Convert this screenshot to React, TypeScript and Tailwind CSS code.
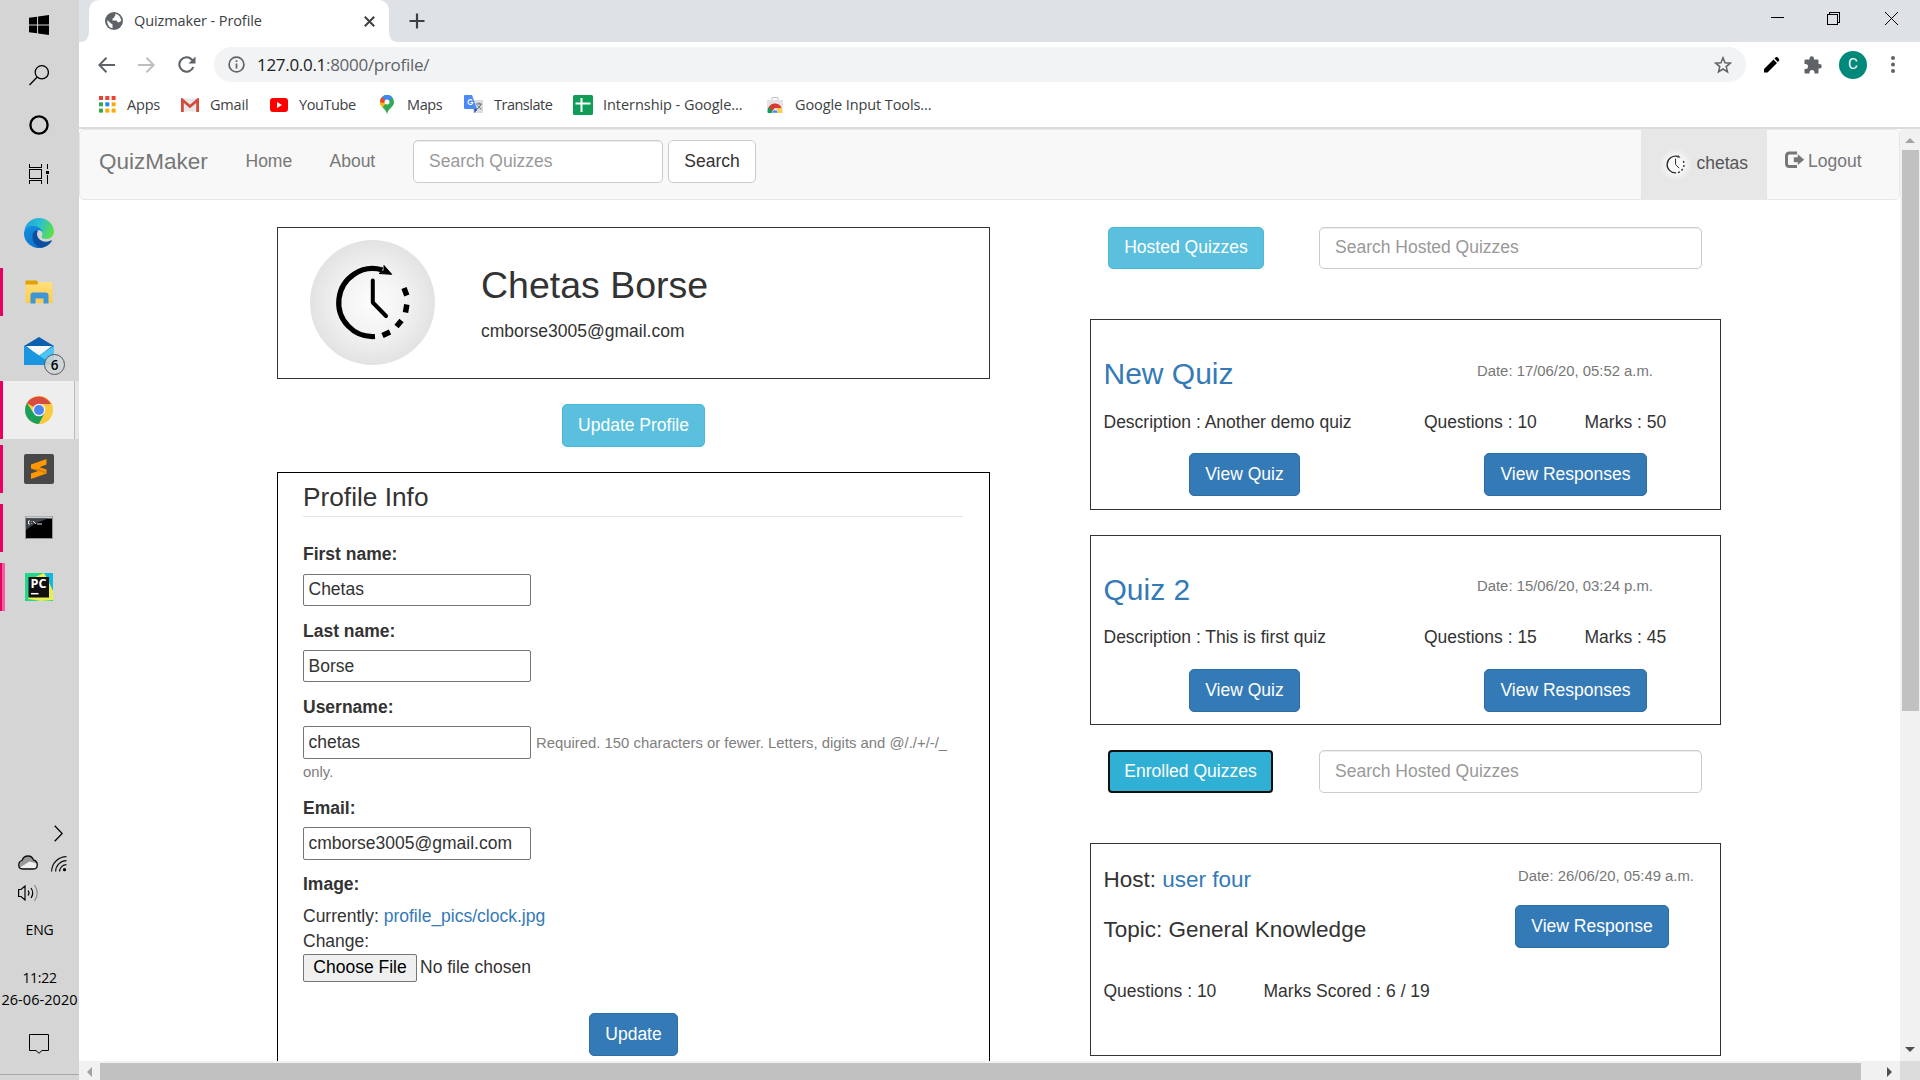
import React from "react";

const UI = "font-['Open_Sans','Noto_Sans',sans-serif]";

function WindowsLogo() {
  return (
    <svg width="20" height="20" viewBox="0 0 20 20" fill="#000">
      <path d="M0 2.8 8.1 1.7V9.5H0zM9.1 1.5 20 0V9.5H9.1zM0 10.5H8.1V18.3L0 17.2zM9.1 10.5H20V20L9.1 18.5z" />
    </svg>
  );
}

function EdgeLogo() {
  return (
    <svg width="30" height="30" viewBox="0 0 30 30">
      <defs>
        <linearGradient id="edgeTop" x1="0" y1="0.2" x2="1" y2="0.5">
          <stop offset="0" stopColor="#1f9fe0" />
          <stop offset="0.5" stopColor="#2cc0d0" />
          <stop offset="1" stopColor="#5be04a" />
        </linearGradient>
        <linearGradient id="edgeLeft" x1="0" y1="0" x2="0.6" y2="1">
          <stop offset="0" stopColor="#1590e0" />
          <stop offset="1" stopColor="#0a72cc" />
        </linearGradient>
      </defs>
      <path d="M0.3 13C1.2 5.500 7.500 0 15 0c9 0 15 6.500 15 13.500 0 4.500-3.500 7.500-7.500 7.500-3.500 0-5.300-1.300-5-2.300 1.700-2 1.200-5-1.500-6.500C10 8 3 8.500.3 13z" fill="url(#edgeTop)" />
      <path d="M0 14.500C1 10 5 7.500 9.500 8c4.500.300 8.300 2.700 9 6-1-1.500-3-2.200-4.500-1.500-3 1.500-3.500 6-1 9.500 2.300 3.300 7 5 11.500 3.500-3 4-8 5.300-12.500 4.200C4.500 27.800-.500 21.500 0 14.500z" fill="url(#edgeLeft)" />
      <path d="M10 13.500c-3 4-1.500 10 2 13.500 1.700 1.700 3.500 2.600 5.500 2.800 4-.700 8-3 10.200-6.600.300-.700-.200-1.100-.900-.700-4.500 2.200-9.500 1.300-12.300-2.300-1.800-2.400-2-5-.500-7.700-1.500-.300-3 .200-4 1z" fill="#0c4f9e" />
    </svg>
  );
}

function FolderIcon() {
  return (
    <svg width="28" height="24" viewBox="0 0 28 24">
      <defs>
        <linearGradient id="fold" x1="0" y1="0" x2="0" y2="1">
          <stop offset="0" stopColor="#ffdf80" />
          <stop offset="1" stopColor="#ffcb45" />
        </linearGradient>
      </defs>
      <path d="M.5 1.500Q.5.500 1.500.500H11.500l1.500 1.500V6H.5z" fill="#e2a100" />
      <path d="M.5 4.500H12l1.800-2.500H26.500q1 0 1 1V22q0 1-1 1H1.500q-1 0-1-1z" fill="url(#fold)" />
      <path d="M5.500 23.500V15q0-2.500 2.500-2.500H20.500q3 0 3 2.500V23.500H18.500V18.500H10.500V23.500z" fill="#3d96d8" />
    </svg>
  );
}

function MailIcon() {
  return (
    <svg width="42" height="38" viewBox="0 0 42 38">
      <path d="M0 9 15 0 30 9 15 20z" fill="#0a5fb0" />
      <path d="M2 9H28L15 19z" fill="#f4f8fc" />
      <path d="M0 9 15 18.500 30 9V28H0z" fill="#2eb5ee" />
      <path d="M0 9 30 28H0z" fill="#1a96e0" />
      <path d="M15 18.500 30 9V28z" fill="#4cc4f4" />
      <circle cx="30.500" cy="27.500" r="10" fill="#cfd5d8" fillOpacity="0.850" stroke="#555" strokeWidth="1" />
      <text x="30.500" y="32.500" textAnchor="middle" fontSize="13.500" fontWeight="600" fontFamily="Open Sans" fill="#000">6</text>
    </svg>
  );
}

function ChromeLogo() {
  return (
    <svg width="28" height="28" viewBox="0 0 28 28">
      <circle cx="14" cy="14" r="14" fill="#fcca3f" />
      <path d="M14 14 1.900 7A14 14 0 0 1 26.100 8H14z" fill="#db4a3e" />
      <path d="M1.900 7A14 14 0 0 0 14 28L19.500 17.500 14 14 8.500 17z" fill="#1a9f5c" />
      <path d="M14 8H26.100A14 14 0 0 1 14 28L20 17z" fill="#fcca3f" />
      <circle cx="14" cy="14" r="6.300" fill="#f2f2f2" />
      <circle cx="14" cy="14" r="5" fill="#4b87f0" />
    </svg>
  );
}

function SublimeIcon() {
  return (
    <svg width="30" height="30" viewBox="0 0 30 30">
      <rect width="30" height="30" rx="2" fill="#484848" />
      <path d="M7 10.500 22.500 5V10.500L15.500 13.200 22.500 15.500V19.500L7 25V19.500L14 17 7 14.500z" fill="#ff9800" />
      <path d="M7 14.500 14 17 22.500 19.500 22.500 18 15 15.300z" fill="#d97f00" />
    </svg>
  );
}

function TerminalIcon() {
  return (
    <svg width="28" height="23" viewBox="0 0 28 23">
      <rect x="0.500" y="0.500" width="27" height="22" fill="#000" stroke="#8f959a" />
      <rect x="1" y="0.500" width="26" height="2" fill="#c9cdd0" />
      <path d="M1 2.500H23C14 6 8 8 1 14z" fill="#3f4347" />
      <path d="M5 5H3.500V8H5M6.500 5.500v.5M6.500 7.500v.5M8 5l3 3M12 8h5" stroke="#e8e8e8" fill="none" />
    </svg>
  );
}

function PycharmIcon() {
  return (
    <svg width="28" height="28" viewBox="0 0 28 28">
      <rect width="28" height="28" fill="#25d58c" />
      <path d="M18 0H28V18L20 8z" fill="#0fbbdd" />
      <path d="M8 5 19 0 22 5 28 18V27L16 28 3 26z" fill="#e6f14e" />
      <rect x="3.500" y="4" width="20.500" height="20.500" fill="#111" />
      <text x="5.500" y="15" fontSize="11.500" fontWeight="700" fontFamily="Open Sans" fill="#fff" textLength="16" lengthAdjust="spacingAndGlyphs">PC</text>
      <path d="M6 20.700H13.500" stroke="#fff" strokeWidth="1.500" />
    </svg>
  );
}

function Tile({ children, active, edge }: { children: React.ReactNode; active?: "run" | "focus"; edge?: boolean }) {
  return (
    <div className={active === "focus" ? "relative flex h-[58px] w-[79px] items-center bg-[#eeeeee]" : "relative flex h-[59px] w-[79px] items-center"}>
      {active === "run" && <span className="absolute left-0 top-[6px] h-[48px] w-[3px] bg-[#ea005e]" />}
      {edge && <span className="absolute left-[2px] top-[6px] h-[48px] w-[3px] bg-[#f0619b]" />}
      {active === "focus" && (
        <>
          <span className="absolute left-0 top-0 h-full w-[3px] bg-[#ea005e]" />
          <span className="absolute right-0 top-0 h-full w-[5px] border-l border-[#bdbdbd] bg-[#e6e6e6]" />
        </>
      )}
      <div className="flex w-[78px] justify-center">{children}</div>
    </div>
  );
}

function Taskbar() {
  return (
    <aside className={`flex h-full w-[79px] shrink-0 flex-col bg-[#d5d5d5] text-black ${UI}`}>
      <div className="flex h-[50px] w-[78px] items-center justify-center"><WindowsLogo /></div>
      <div className="flex h-[50px] w-[78px] items-center justify-center">
        <svg width="20" height="21" viewBox="0 0 20 21" fill="none" stroke="#000" strokeWidth="1.300">
          <circle cx="12.800" cy="7.300" r="6.600" /><path d="M8 12.300.500 20" />
        </svg>
      </div>
      <div className="flex h-[50px] w-[78px] items-center justify-center">
        <svg width="20" height="20" viewBox="0 0 20 20"><circle cx="10" cy="10" r="8.600" fill="none" stroke="#000" strokeWidth="2.300" /></svg>
      </div>
      <div className="flex h-[48px] w-[78px] items-center justify-center">
        <svg width="20" height="20" viewBox="0 0 20 20" fill="none" stroke="#000" shapeRendering="crispEdges">
          <path d="M.500 5.500H12.500V14.500H.500zM.500 0V3.500H12.500V0M.500 20V16.500H12.500V20M18.500 0V5M18.500 11V20" />
          <rect x="17" y="6.500" width="3" height="3" fill="#000" stroke="none" />
        </svg>
      </div>
      <div className="mt-[5px]"><Tile><EdgeLogo /></Tile></div>
      <Tile active="run"><FolderIcon /></Tile>
      <div className="pb-px"><Tile><span className="ml-[12px] mt-[10px] block"><MailIcon /></span></Tile></div>
      <Tile active="focus"><ChromeLogo /></Tile>
      <Tile active="run"><SublimeIcon /></Tile>
      <Tile active="run"><TerminalIcon /></Tile>
      <Tile active="run" edge><PycharmIcon /></Tile>
      <div className="mt-[209px] flex h-[17px] pl-[54px]">
        <svg width="9" height="17" viewBox="0 0 9 17" fill="none" stroke="#000" strokeWidth="1.300"><path d="M.700.700 8.200 8.500.700 16.300" /></svg>
      </div>
      <div className="mt-[13px] flex h-[17px] items-start gap-[13px] pl-[18px]">
        <svg width="20" height="15" viewBox="0 0 20 15">
          <path d="M4.500 14Q.700 14 .700 10 .700 6.500 4 5.500 5.500 1 10 1 14 1 15.500 5 19.300 6 19.300 10 19.300 14 15.500 14z" fill="#9a9a9a" />
          <path d="M2 12.500 11.500 6.500 18.500 8.500Q19.500 13.500 15.500 13.500H4.500Q2.500 13.500 2 12.500z" fill="#f0f0f0" />
          <path d="M4.500 14Q.700 14 .700 10 .700 6.500 4 5.500 5.500 1 10 1 14 1 15.500 5 19.300 6 19.300 10 19.300 14 15.500 14z" fill="none" stroke="#111" strokeWidth="1.300" />
        </svg>
        <svg className="mt-px" width="16" height="16" viewBox="0 0 16 16" fill="none" stroke="#111" strokeWidth="1.200">
          <path d="M.600 15.500A15 15 0 0 1 15.500.600M4.600 15.500A11 11 0 0 1 15.500 4.600M8.600 15.500A7 7 0 0 1 15.500 8.600" />
          <circle cx="13.500" cy="13.700" r="1.600" fill="#000" stroke="none" />
        </svg>
      </div>
      <div className="mt-[12px] flex h-[18px] pl-[18px]">
        <svg width="21" height="18" viewBox="0 0 21 18" fill="none" stroke="#000" strokeWidth="1.200">
          <path d="M.600 5.500H3L7 2V16L3 12.500H.600zM10 6.500Q12 9 10 11.500M13 4Q16.500 9 13 14" />
          <path d="M16.500 1Q22 9 16.500 17" stroke="#888" />
        </svg>
      </div>
      <div className="mt-[18px] w-[79px] text-center text-[14px] leading-[20px] tracking-[-0.2px]">ENG</div>
      <div className="mt-[27px] w-[79px] text-center text-[14px] leading-[22px] tracking-[-0.3px]">11:22</div>
      <div className="w-[79px] whitespace-nowrap text-center text-[14.500px] leading-[22px] tracking-[0.05px]">26-06-2020</div>
      <div className="mt-[23px] flex pl-[29px]">
        <svg width="20" height="20" viewBox="0 0 20 20" fill="none" stroke="#000"><path d="M.500.500H19.500V16.500H13L10 19.300 7 16.500H.500z" /></svg>
      </div>
      <div className="mt-[20px] h-px w-full bg-[#a8a8a8]" />
    </aside>
  );
}

function TabStrip() {
  return (
    <div className={`flex h-[42px] bg-[#dee1e6] ${UI}`}>
      <svg className="self-end" width="10" height="10" viewBox="0 0 10 10"><path d="M0 10Q10 10 10 0V10z" fill="#fff" /></svg>
      <div className="flex w-[300px] items-center rounded-t-[10px] bg-white pl-[16px] pr-[14px]">
        <svg width="18" height="18" viewBox="0 0 18 18">
          <circle cx="9" cy="9" r="9" fill="#5f6368" />
          <path d="M2 8 6 11.500Q8 12 7.500 13.500V16.300Q2.500 15.500 2 8zM10.500 1.800Q16 3.500 16.200 9L13.500 10.500Q12 10 11.500 8.500H7.500V6.500Q9.500 6.500 9.500 4.500 10.500 4 10.500 1.800z" fill="#fff" />
        </svg>
        <span className="ml-[11px] flex-1 text-[14.500px] leading-[20px] tracking-[-0.1px] text-[#3c4043]">Quizmaker - Profile</span>
        <svg width="11" height="11" viewBox="0 0 11 11" stroke="#3c4043" strokeWidth="2"><path d="M.800.800 10.200 10.200M10.200.800.800 10.200" /></svg>
      </div>
      <svg className="self-end" width="10" height="10" viewBox="0 0 10 10"><path d="M10 10Q0 10 0 0V10z" fill="#fff" /></svg>
      <svg className="ml-[9.500px] mt-[13px]" width="16" height="16" viewBox="0 0 16 16" stroke="#3c4043" strokeWidth="2.200"><path d="M8 .500V15.500M.500 8H15.500" /></svg>
      <div className="ml-auto flex pr-[22px] pt-[12px]">
        <svg className="mr-[43px]" width="13" height="13" viewBox="0 0 13 13"><path d="M0 5.500H13" stroke="#000" shapeRendering="crispEdges" /></svg>
        <svg className="mr-[45px]" width="13" height="13" viewBox="0 0 13 13" fill="none" stroke="#000" shapeRendering="crispEdges"><path d="M.500 2.500H10.500V12.500H.500zM2.500 2.500V.500H12.500V10.500H10.500" /></svg>
        <svg width="13" height="13" viewBox="0 0 13 13" stroke="#000"><path d="M0 0 13 13M13 0 0 13" /></svg>
      </div>
    </div>
  );
}

function Toolbar() {
  return (
    <div className={`flex h-[45px] items-center bg-white pl-[19px] ${UI}`}>
      <svg width="17" height="16" viewBox="0 0 17 16" fill="none" stroke="#5f6368" strokeWidth="2"><path d="M17 8H1.500M8.500.800 1.300 8 8.500 15.200" /></svg>
      <svg className="ml-[23px]" width="17" height="16" viewBox="0 0 17 16" fill="none" stroke="#bcbec0" strokeWidth="2"><path d="M0 8H15.500M8.500.800 15.700 8 8.500 15.200" /></svg>
      <svg className="ml-[23px]" width="18" height="17" viewBox="0 0 18 17" fill="none" stroke="#5f6368" strokeWidth="2.100">
        <path d="M15.300 11A7.200 7.200 0 1 1 13.700 3.400L16 6" /><path d="M17.500.500V7.500H10.500z" fill="#5f6368" stroke="none" />
      </svg>
      <div className="ml-[18px] flex h-[35px] w-[1532px] items-center rounded-full bg-[#f1f3f4] pl-[14px] pr-[14px]">
        <svg width="17" height="17" viewBox="0 0 17 17" fill="none" stroke="#5f6368" strokeWidth="1.700"><circle cx="8.500" cy="8.500" r="7.400" /><path d="M8.500 7.500V12.500M8.500 4.300V6" /></svg>
        <span className="ml-[12px] flex-1 text-[17px] leading-[24px] tracking-[-0.300px] text-[#5f6368]"><span className="text-[#202124]">127.0.0.1</span>:8000/profile/</span>
        <svg width="18" height="18" viewBox="0 0 18 18" fill="none" stroke="#5f6368" strokeWidth="1.500"><path d="M9 1.800 11 6.800 16.300 7.200 12.200 10.600 13.500 15.800 9 13 4.500 15.800 5.800 10.600 1.700 7.200 7 6.800z" /></svg>
      </div>
      <svg className="ml-[18px]" width="16" height="16" viewBox="0 0 16 16"><path d="M0 12 9.500 2.500 13 6 3.500 15.500H0zM10.500 1.500 12 0Q13 -.300 14 .700L15 2Q15.500 3 15 3.700L13.800 5z" fill="#000" /></svg>
      <svg className="ml-[24px]" width="18" height="18" viewBox="0 0 18 18"><path d="M.500 4.500Q.500 3.500 1.500 3.500H5.500V2.500A2.200 2.200 0 0 1 10 2.500V3.500H13.500Q14.500 3.500 14.500 4.500V8H15.500A2.200 2.200 0 0 1 15.500 12.500H14.500V16.500Q14.500 17.500 13.500 17.500H10.500V16.500A2.400 2.400 0 0 0 5.500 16.500V17.500H1.500Q.500 17.500 .500 16.500V13H1.500A2.400 2.400 0 0 0 1.500 8H.500z" fill="#5f6368" /></svg>
      <div className="ml-[17px] flex size-[28px] items-center justify-center rounded-full bg-[#00897b] font-[Roboto,sans-serif] text-[15px] text-white">C</div>
      <svg className="ml-[24px]" width="4" height="17" viewBox="0 0 4 17" fill="#5f6368"><circle cx="2" cy="2" r="2" /><circle cx="2" cy="8.500" r="2" /><circle cx="2" cy="15" r="2" /></svg>
    </div>
  );
}

const appDots = ["#ea4335", "#ea4335", "#ea4335", "#34a853", "#1e88f7", "#fbab00", "#34a853", "#fbab00", "#fbab00"];

function Bookmark({ width, pad, icon, label, track = "tracking-[-0.4px]" }: { width: string; pad: string; icon: React.ReactNode; label: string; track?: string }) {
  return (
    <div className={`flex shrink-0 items-center ${width}`}>
      <div className={`flex shrink-0 items-center ${pad}`}>{icon}</div>
      <span className={`whitespace-nowrap text-[14.500px] leading-[20px] text-[#3c4043] ${track}`}>{label}</span>
    </div>
  );
}

function Bookmarks() {
  return (
    <div className={`flex h-[42px] items-center border-b-2 border-[#dadce0] bg-white pb-[5px] pl-[20px] ${UI}`}>
      <Bookmark width="w-[82px]" pad="w-[28px]" label="Apps" track="tracking-[-0.2px]" icon={
        <svg width="17" height="17" viewBox="0 0 17 17">{appDots.map((c, i) => <rect key={i} x={(i % 3) * 6.300} y={Math.floor(i / 3) * 6.300} width="4" height="4" fill={c} />)}</svg>} />
      <Bookmark width="w-[89px]" pad="w-[29px]" label="Gmail" track="tracking-[-0.2px]" icon={
        <svg width="18" height="14" viewBox="0 0 18 14"><rect x="1" y=".5" width="16" height="13" fill="#e8e8e8" /><path d="M1.400 14V2L9 8.500 16.600 2V14" fill="none" stroke="#d54b3d" strokeWidth="2.800" /></svg>} />
      <Bookmark width="w-[110px]" pad="w-[29px]" label="YouTube" icon={
        <svg width="18" height="14" viewBox="0 0 18 14"><rect width="18" height="14" rx="3" fill="#f00" /><path d="M7 4 12 7 7 10z" fill="#fff" /></svg>} />
      <Bookmark width="w-[84px]" pad="w-[27px]" label="Maps" icon={
        <svg width="14" height="19" viewBox="0 0 14 19">
          <path d="M7 0A7 7 0 0 1 14 7C14 12 8.500 13 7 19 5.500 13 0 12 0 7A7 7 0 0 1 7 0z" fill="#34a853" />
          <path d="M0 7A7 7 0 0 1 2 2L7 7 2.500 12.500Q0 10 0 7z" fill="#fbbc04" />
          <path d="M0 7A7 7 0 0 1 2 2L7 7 3 8z" fill="#ea4335" />
          <path d="M2 2A7 7 0 0 1 12.500 2.500L7 7z" fill="#4285f4" />
          <circle cx="7" cy="7" r="2.500" fill="#fff" />
        </svg>} />
      <Bookmark width="w-[109px]" pad="w-[30px]" label="Translate" track="tracking-[-0.5px]" icon={
        <svg width="20" height="19" viewBox="0 0 20 19">
          <rect x="9" y="5" width="10" height="13" fill="#dcdcdc" /><path d="M10 13H13V15L10.500 18z" fill="#3447b8" />
          <path d="M1 0H8L13 14H1Q0 14 0 13V1Q0 0 1 0z" fill="#4c8bf5" />
          <path d="M8.300 5.500A2.400 2.400 0 1 0 8.800 7.500H6.500" fill="none" stroke="#fff" strokeWidth="1.100" />
          <path d="M12 9H18M15 7.500V9M17 9Q16 12.500 12.500 14.500M13.500 10.500 17.500 14.500" stroke="#5f7480" fill="none" />
        </svg>} />
      <Bookmark width="w-[194px]" pad="w-[30px]" label="Internship - Google..." track="tracking-[-0.050px]" icon={
        <svg width="20" height="20" viewBox="0 0 20 20"><rect width="20" height="20" rx="1.500" fill="#0f9d58" /><path d="M8.500 3V17M2.500 8.500H17.500" stroke="#fff" strokeWidth="2" /></svg>} />
      <Bookmark width="w-[200px]" pad="w-[28px]" label="Google Input Tools..." track="tracking-[-0.100px]" icon={
        <svg width="16" height="16" viewBox="0 0 16 16">
          <path d="M5 3V.500H11V3" stroke="#c4c4c4" fill="none" /><rect y="3" width="16" height="13" fill="#e4e4e4" />
          <path d="M1 16A7 7 0 0 1 3 8.500L7 16z" fill="#0f9d58" /><path d="M2 10A7 7 0 0 1 14.500 11H8L5 14z" fill="#db3a30" /><path d="M10 11H14.500Q15.500 13 15 16H9z" fill="#ffcd40" />
          <path d="M5 16A3 3 0 0 1 11 16z" fill="#4285f4" stroke="#eee" strokeWidth=".6" />
        </svg>} />
    </div>
  );
}

function ClockArt({ size, color = "#000" }: { size: number; color?: string }) {
  return (
    <svg width={size} height={size} viewBox="0 0 125 125" fill="none" stroke={color}>
      <path d="M65 96.500A34 34 0 1 1 72.500 30" strokeWidth="5.200" />
      <path d="M74 25.500 81.700 34.300 69 33.500 74 30.500z" fill={color} strokeWidth="1" />
      <path d="M62.800 40.500V62.500L76 76" strokeWidth="4" strokeLinecap="round" strokeLinejoin="round" />
      <path d="M94 48 96.800 55.500M96.800 64.500 95.500 72.500M91.500 80.500 86.500 86.500M80 92 72.500 95.500" strokeWidth="5.500" />
    </svg>
  );
}

function Navbar() {
  return (
    <nav className="flex h-[71px] w-[1821px] shrink-0 rounded-[5px] border border-[#e7e7e7] bg-[#f8f8f8] pl-[19px] text-[17.500px] leading-[25px] text-[#777]">
      <a className="mt-[19px] w-[146.500px] text-[22.500px]">QuizMaker</a>
      <a className="mt-[19px] w-[84px]">Home</a>
      <a className="mt-[19px] w-[83.500px]">About</a>
      <input placeholder="Search Quizzes" className="mt-[10px] h-[43px] w-[250px] rounded-[5px] border border-[#ccc] bg-white px-[15px] pb-[1px] text-[17.500px] shadow-[inset_0_1px_1px_rgba(0,0,0,0.075)] placeholder:text-[#999]" />
      <button className="ml-[5px] mt-[10px] h-[43px] w-[88px] rounded-[5px] border border-[#ccc] bg-white pb-[1px] text-[#333]">Search</button>
      <div className="ml-auto flex">
        <a className="flex h-[69px] w-[126px] bg-[#e7e7e7] pl-[19px] text-[#555]">
          <span className="mt-[19px] size-[31px] bg-[radial-gradient(circle,#fafafa_30%,#e7e7e7_75%)]"><ClockArt size={31} color="#2b2b2b" /></span>
          <span className="ml-[5.500px] mt-[21px]">chetas</span>
        </a>
        <a className="flex w-[132px] pl-[18px]">
          <svg className="mt-[21px]" width="20" height="18" viewBox="0 0 20 18"><path d="M12 2H4.500Q1.500 2 1.500 5V12.500Q1.500 15.500 4.500 15.500H12" fill="none" stroke="#777" strokeWidth="3" /><path d="M8.500 6H12.500V2.500L19.500 8.800 12.500 14.500V11.500H8.500z" fill="#777" stroke="#f8f8f8" strokeWidth=".6" /></svg>
          <span className="ml-[3px] mt-[19px]">Logout</span>
        </a>
      </div>
    </nav>
  );
}

function Primary({ children, className }: { children: React.ReactNode; className: string }) {
  return <button className={`h-[43px] shrink-0 rounded-[5px] border border-[#2e6da4] bg-[#337ab7] pb-[1px] text-white ${className}`}>{children}</button>;
}

function Field({ value, className }: { value: string; className: string }) {
  return <input defaultValue={value} className={`block w-[228px] shrink-0 rounded-[2px] border border-[#767676] bg-white px-[4.500px] text-[17.500px] text-[#333] ${className}`} />;
}

function ProfileColumn() {
  return (
    <div className="flex w-[713px] shrink-0 flex-col">
      <section className="flex h-[152px] shrink-0 border border-[#333] pl-[32px]">
        <div className="mt-[12px] size-[125px] overflow-hidden rounded-full bg-[radial-gradient(circle,#fdfdfd_0%,#f3f3f3_35%,#e2e2e2_72%)]"><ClockArt size={125} /></div>
        <div className="ml-[46px]">
          <h2 className="mt-[37px] text-[37.500px] leading-[41px]">Chetas Borse</h2>
          <p className="mt-[13px]">cmborse3005@gmail.com</p>
        </div>
      </section>
      <button className="mt-[25px] h-[43px] w-[143px] shrink-0 self-center rounded-[5px] border border-[#46b8da] bg-[#5bc0de] pb-[1px] text-white">Update Profile</button>
      <section className="mt-[25px] flex h-[620px] shrink-0 flex-col border border-black px-[25px]">
        <h3 className="mt-[6px] h-[38px] w-[660px] border-b border-[#e5e5e5] text-[26.250px] leading-[37px]">Profile Info</h3>
        <label className="mt-[25px] font-bold">First name:</label>
        <Field value="Chetas" className="mt-[7px] h-[32px] pb-[2px]" />
        <label className="mt-[13px] font-bold">Last name:</label>
        <Field value="Borse" className="mt-[6px] h-[32px]" />
        <label className="mt-[13px] font-bold">Username:</label>
        <div className="mt-[6px] flex h-[33px]">
          <Field value="chetas" className="h-[33px]" />
          <span className="ml-[5px] mt-[5px] whitespace-nowrap text-[14.875px] text-[#808080]">Required. 150 characters or fewer. Letters, digits and @/./+/-/_</span>
        </div>
        <span className="mt-[1px] text-[14.875px] text-[#808080]">only.</span>
        <label className="mt-[11px] font-bold">Email:</label>
        <Field value="cmborse3005@gmail.com" className="mt-[6px] h-[33px]" />
        <label className="mt-[12px] font-bold">Image:</label>
        <p className="mt-[7px]">Currently: <a className="text-[#337ab7]">profile_pics/clock.jpg</a></p>
        <p>Change:</p>
        <div className="flex h-[28px]">
          <button className="w-[114px] rounded-[2px] border border-[#767676] bg-[#efefef] pb-[1px] leading-[23px] text-black">Choose File</button>
          <span className="ml-[3px] mt-[1px]">No file chosen</span>
        </div>
        <Primary className="mt-[31px] w-[89px] self-center">Update</Primary>
      </section>
    </div>
  );
}

function SearchHosted() {
  return <input placeholder="Search Hosted Quizzes" className="ml-auto mr-[19px] h-full w-[383px] rounded-[5px] border border-[#ccc] bg-white px-[15px] pb-[1px] text-[17.500px] shadow-[inset_0_1px_1px_rgba(0,0,0,0.075)] placeholder:text-[#999]" />;
}

type Hosted = { title: string; date: string; description: string; questions: number; marks: number; className: string; heading: string; details: string; actions: string };

function HostedCard({ title, date, description, questions, marks, className, heading, details, actions }: Hosted) {
  return (
    <section className={`shrink-0 border border-[#333] pl-[12.500px] ${className}`}>
      <div className="mt-[37px] flex h-[33px]">
        <h3 className="w-[373.500px] text-[30px] leading-[33px] text-[#337ab7]">{title}</h3>
        <span className={`text-[14.875px] leading-[21px] text-[#777] ${heading}`}>Date: {date}</span>
      </div>
      <div className={`flex ${details}`}>
        <span className="w-[320.500px]">Description : {description}</span>
        <span className="w-[160.500px]">Questions : {questions}</span>
        <span>Marks : {marks}</span>
      </div>
      <div className={`flex ${actions}`}>
        <Primary className="ml-[85.500px] w-[111px]">View Quiz</Primary>
        <Primary className="ml-[184px] w-[163px]">View Responses</Primary>
      </div>
    </section>
  );
}

function QuizColumn() {
  return (
    <div className="ml-[100px] flex w-[631px] shrink-0 flex-col">
      <div className="flex h-[42px] shrink-0 pl-[18px]">
        <button className="w-[156px] rounded-[5px] border border-[#46b8da] bg-[#5bc0de] pb-[2px] text-white">Hosted Quizzes</button>
        <SearchHosted />
      </div>
      <HostedCard className="mt-[50px] h-[191px]" heading="mt-[4px]" details="mt-[20px]" actions="mt-[18px]" title="New Quiz" date="17/06/20, 05:52 a.m." description="Another demo quiz" questions={10} marks={50} />
      <HostedCard className="mt-[25px] h-[190px]" heading="mt-[3px]" details="mt-[19px]" actions="mt-[19px]" title="Quiz 2" date="15/06/20, 03:24 p.m." description="This is first quiz" questions={15} marks={45} />
      <div className="mt-[25px] flex h-[43px] shrink-0 pl-[18px]">
        <button className="w-[165px] rounded-[4px] border-2 border-[#101010] bg-[#31b0d5] pb-[1px] text-white">Enrolled Quizzes</button>
        <SearchHosted />
      </div>
      <section className="mt-[50px] flex h-[213px] shrink-0 border border-[#333] pl-[12.500px]">
        <div className="w-[411.500px]">
          <p className="mt-[23px] text-[22.500px]">Host: <a className="text-[#337ab7]">user four</a></p>
          <p className="mt-[25px] text-[22.500px]">Topic: General Knowledge</p>
          <div className="mt-[37px] flex">
            <span className="w-[160px]">Questions : 10</span>
            <span>Marks Scored : 6 / 19</span>
          </div>
        </div>
        <div>
          <p className="ml-[3px] mt-[22px] text-[14.875px] leading-[21px] text-[#777]">Date: 26/06/20, 05:49 a.m.</p>
          <Primary className="mt-[18px] w-[154px]">View Response</Primary>
        </div>
      </section>
    </div>
  );
}

function VerticalScroll() {
  return (
    <div className="flex w-[20px] shrink-0 flex-col items-center bg-[#f1f1f1]">
      <svg className="mt-[9px] h-[12px] w-[10px] shrink-0" viewBox="0 0 10 12"><path d="M0 5 5 0 10 5z" fill="#a3a3a3" /></svg>
      <div className="h-[561px] w-[17px] shrink-0 bg-[#c1c1c1]" />
      <svg className="mb-[9px] mt-auto" width="10" height="5" viewBox="0 0 10 5"><path d="M0 0H10L5 5z" fill="#505050" /></svg>
    </div>
  );
}

function HorizontalScroll() {
  return (
    <div className="flex h-[19px] shrink-0 bg-[#f1f1f1]">
      <svg className="ml-[8px] mt-[6px]" width="5" height="10" viewBox="0 0 5 10"><path d="M5 0V10L0 5z" fill="#a3a3a3" /></svg>
      <div className="ml-[8px] mt-[2px] h-[17px] w-[1761px] bg-[#c1c1c1]" />
      <svg className="ml-[26px] mt-[6px]" width="5" height="10" viewBox="0 0 5 10"><path d="M0 0V10L5 5z" fill="#505050" /></svg>
      <div className="ml-auto h-full w-[20px] bg-[#dcdcdc]" />
    </div>
  );
}

export default function App() {
  return (
    <div className="flex h-[1080px] w-[1920px] overflow-hidden bg-white">
      <Taskbar />
      <div className="flex h-full w-[1841px] flex-col">
        <TabStrip />
        <Toolbar />
        <Bookmarks />
        <div className="flex h-[932px] w-full">
          <div className="flex h-full w-[1821px] flex-col overflow-hidden font-['Liberation_Sans',Arial,sans-serif] text-[17.500px] leading-[25px] text-[#333]">
            <Navbar />
            <main className="flex min-h-0 flex-1 overflow-hidden pl-[198px] pt-[27px]">
              <ProfileColumn />
              <QuizColumn />
            </main>
          </div>
          <VerticalScroll />
        </div>
        <HorizontalScroll />
      </div>
    </div>
  );
}
